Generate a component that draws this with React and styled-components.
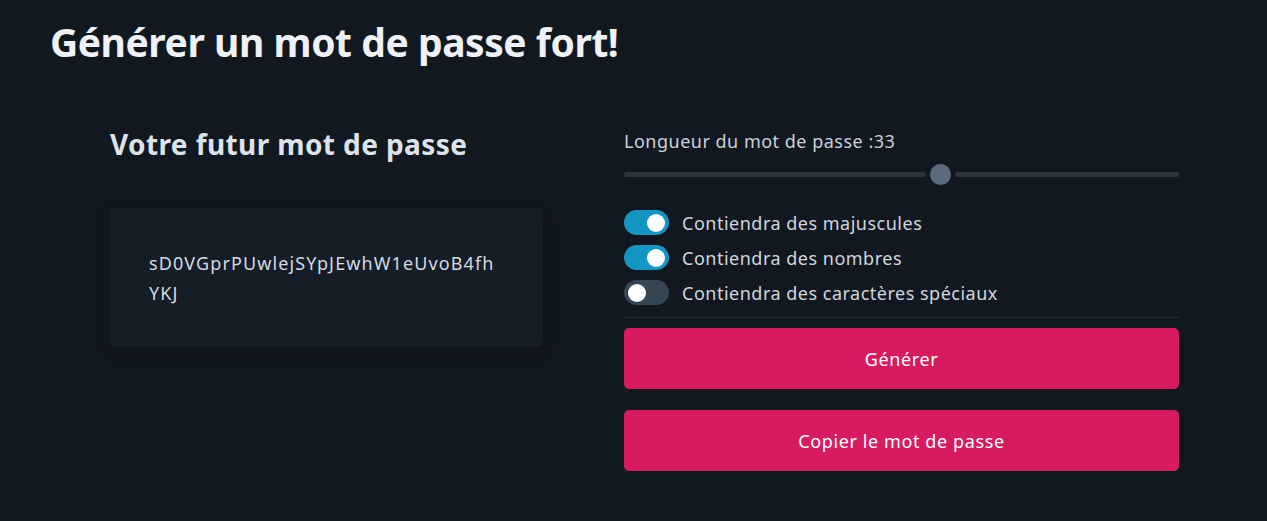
import React, { useState } from "react";
import styled, { createGlobalStyle } from "styled-components";

const Global = createGlobalStyle`
  html, body { margin: 0; padding: 0; background: #121820; }
  body { font-family: "Noto Sans", "DejaVu Sans", sans-serif; color: #e5e7eb; }
  * { box-sizing: border-box; }
`;

const Page = styled.div`
  min-height: 521px;
  background: #121820;
  padding: 15px 50px 0 50px;
`;

const Title = styled.h1`
  margin: 0;
  font-size: 39px;
  font-weight: 700;
  color: #eef1f5;
  line-height: 54px;
  letter-spacing: -0.45px;
`;

const Main = styled.div`
  display: grid;
  grid-template-columns: 433px 555px;
  column-gap: 81px;
  padding-left: 60px;
  margin-top: 57px;
`;

const Left = styled.section`
  display: flex;
  flex-direction: column;
`;

const SubTitle = styled.h2`
  margin: 0;
  font-size: 28px;
  font-weight: 700;
  line-height: 36px;
  color: #dde3ea;
  letter-spacing: 0.4px;
`;

const Card = styled.div`
  margin-top: 46px;
  height: 139px;
  background: #151d26;
  border-radius: 5px;
  box-shadow: 0 5px 14px rgba(0, 0, 0, 0.2);
  padding: 40px 44px 0 39px;
`;

const Password = styled.p`
  margin: 0;
  font-size: 18px;
  line-height: 30px;
  color: #d3dae3;
  letter-spacing: 1.1px;
  word-break: break-all;
`;

const Right = styled.section`
  display: flex;
  flex-direction: column;
`;

const Label = styled.div`
  font-size: 18px;
  line-height: 24px;
  color: #c9d1db;
  margin-top: 3px;
  letter-spacing: 0.5px;
`;

const SliderWrap = styled.div`
  height: 22px;
  margin-top: 10px;
  display: flex;
  align-items: center;
`;

const Track = styled.div`
  height: 5px;
  border-radius: 3px;
  background: #29343f;
  flex: ${(p) => p.$grow};
`;

const Gap = styled.div`
  width: 4px;
`;

const Thumb = styled.div`
  width: 21px;
  height: 21px;
  border-radius: 50%;
  background: #5b6b7b;
  flex: none;
`;

const Options = styled.div`
  display: flex;
  flex-direction: column;
  gap: 10px;
  margin-top: 25px;
  padding-bottom: 12px;
  border-bottom: 1px solid #232d38;
`;

const OptionRow = styled.label`
  display: flex;
  align-items: center;
  gap: 13px;
  font-size: 18px;
  letter-spacing: 0.5px;
  color: #cfd6df;
  height: 25px;
  cursor: pointer;
`;

const Switch = styled.span`
  width: 45px;
  height: 25px;
  border-radius: 13px;
  background: ${(p) => (p.$on ? "#1496c4" : "#374553")};
  position: relative;
  flex: none;
  &::after {
    content: "";
    position: absolute;
    top: 3.5px;
    left: ${(p) => (p.$on ? "23px" : "4px")};
    width: 18px;
    height: 18px;
    border-radius: 50%;
    background: #ffffff;
  }
`;

const Buttons = styled.div`
  display: flex;
  flex-direction: column;
  gap: 21px;
  margin-top: 10px;
`;

const Button = styled.button`
  height: 61px;
  border: none;
  border-radius: 5px;
  background: #d81b60;
  color: #fff;
  font-family: inherit;
  font-size: 18px;
  letter-spacing: 0.6px;
  cursor: pointer;
`;

export default function App() {
  const [opts, setOpts] = useState([true, true, false]);
  const labels = [
    "Contiendra des majuscules",
    "Contiendra des nombres",
    "Contiendra des caractères spéciaux",
  ];
  const frac = 0.574;
  return (
    <>
      <Global />
      <Page>
        <Title>Générer un mot de passe fort!</Title>
        <Main>
          <Left>
            <SubTitle>Votre futur mot de passe</SubTitle>
            <Card>
              <Password>sD0VGprPUwlejSYpJEwhW1eUvoB4fhYKJ</Password>
            </Card>
          </Left>
          <Right>
            <Label>Longueur du mot de passe :33</Label>
            <SliderWrap>
              <Track $grow={frac} />
              <Gap />
              <Thumb />
              <Gap />
              <Track $grow={1 - frac} />
            </SliderWrap>
            <Options>
              {labels.map((l, i) => (
                <OptionRow
                  key={l}
                  onClick={() =>
                    setOpts((o) => o.map((v, j) => (j === i ? !v : v)))
                  }
                >
                  <Switch $on={opts[i]} />
                  {l}
                </OptionRow>
              ))}
            </Options>
            <Buttons>
              <Button>Générer</Button>
              <Button>Copier le mot de passe</Button>
            </Buttons>
          </Right>
        </Main>
      </Page>
    </>
  );
}
